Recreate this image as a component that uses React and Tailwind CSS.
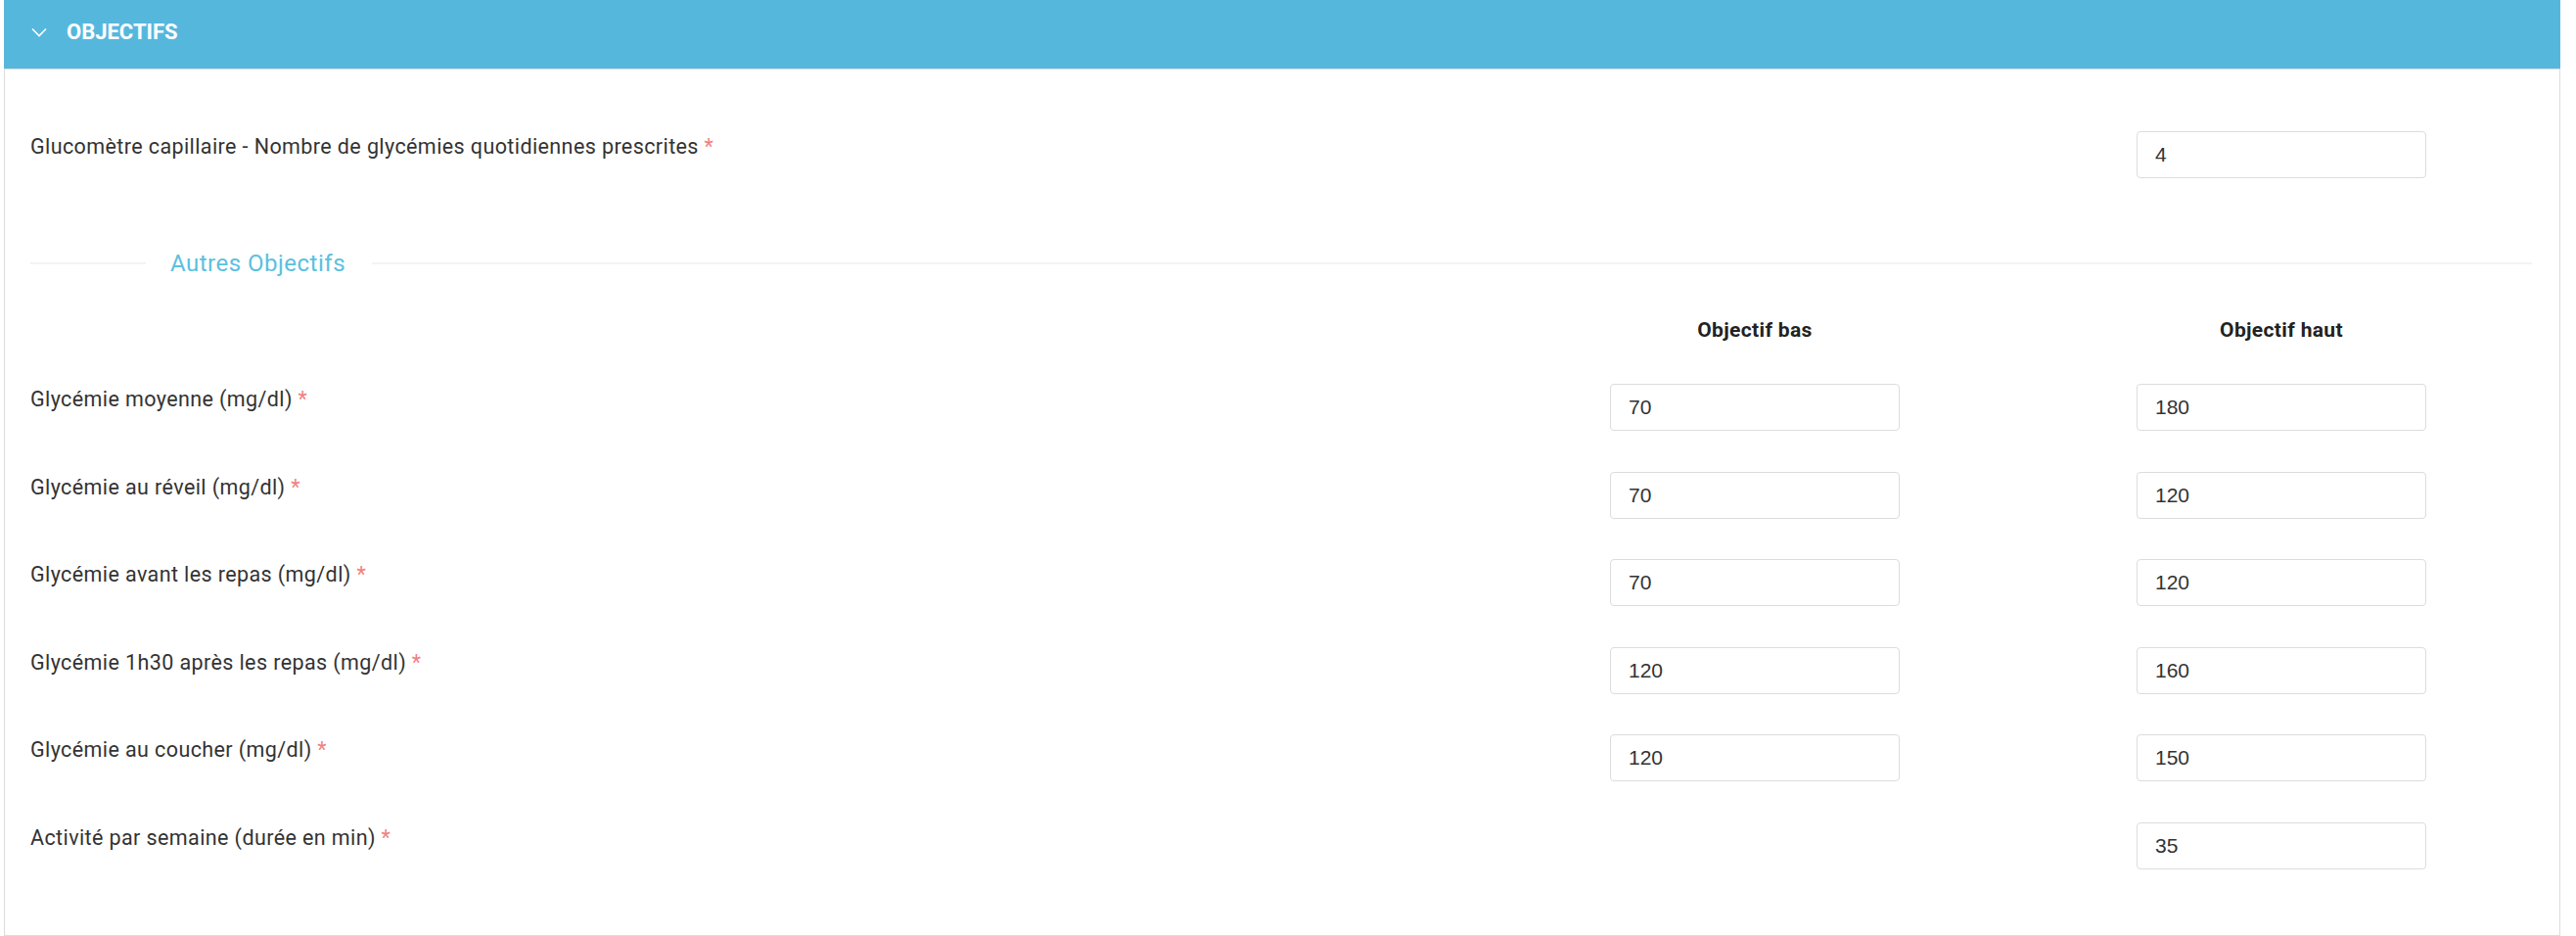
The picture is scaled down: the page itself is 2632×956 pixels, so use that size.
const rows = [
  { label: "Glycémie moyenne (mg/dl)", low: "70", high: "180" },
  { label: "Glycémie au réveil (mg/dl)", low: "70", high: "120" },
  { label: "Glycémie avant les repas (mg/dl)", low: "70", high: "120" },
  { label: "Glycémie 1h30 après les repas (mg/dl)", low: "120", high: "160" },
  { label: "Glycémie au coucher (mg/dl)", low: "120", high: "150" },
  { label: "Activité par semaine (durée en min)", low: null, high: "35" },
];

function Field({ value }) {
  return (
    <input
      readOnly
      value={value}
      className="w-[296px] h-[48px] border border-[#dcdcdc] rounded-[4px] bg-white pl-[18px] text-[21px] text-[#333] outline-none"
      style={{ fontFamily: '"Liberation Sans", Arial, sans-serif' }}
    />
  );
}

function Label({ children }) {
  return (
    <div className="flex-1 pt-[1px] text-[21.5px] tracking-[0.4px] leading-[30px] text-[#333]">
      {children} <span className="text-[#f08080]">*</span>
    </div>
  );
}

export default function App() {
  return (
    <div className="bg-white w-[2632px] h-[956px]" style={{ fontFamily: 'Roboto, "Noto Sans", sans-serif' }}>
      <div className="ml-[4px] w-[2612px]">
        <div className="h-[70px] bg-[#56b7dd] flex items-center gap-[20px] pl-[28px] pb-[4px]">
          <svg width="16" height="10" viewBox="0 0 16 10" fill="none">
            <polyline points="1,1.5 8,8.5 15,1.5" stroke="white" strokeWidth="1.6" />
          </svg>
          <span className="text-white font-bold text-[22px] leading-none">OBJECTIFS</span>
        </div>
        <div className="border border-[#dcdcdc] h-[886px] pt-[63px] pl-[26px] pr-[28px]">
          <div className="flex items-start pr-[108px]">
            <Label>Glucomètre capillaire - Nombre de glycémies quotidiennes prescrites</Label>
            <Field value="4" />
          </div>

          <div className="mt-[67px] h-[40px] flex items-center">
            <div className="w-[118px] h-[2px] bg-[#f3f3f3]" />
            <span className="ml-[25px] mr-[27px] text-[24px] tracking-[0.5px] text-[#5bc0de] leading-none">Autres Objectifs</span>
            <div className="flex-1 h-[2px] bg-[#f3f3f3]" />
          </div>

          <div className="mt-[33px] flex pr-[108px] text-[21px] tracking-[0.35px] leading-[30px] font-bold text-[#222]">
            <div className="flex-1" />
            <div className="w-[296px] text-center">Objectif bas</div>
            <div className="w-[242px]" />
            <div className="w-[296px] text-center">Objectif haut</div>
          </div>

          <div className="mt-[40px] flex flex-col gap-[41.6px]">
            {rows.map((r) => (
              <div key={r.label} className="flex items-start pr-[108px]">
                <Label>{r.label}</Label>
                <div className="w-[296px]">{r.low && <Field value={r.low} />}</div>
                <div className="w-[242px]" />
                <Field value={r.high} />
              </div>
            ))}
          </div>
        </div>
      </div>
    </div>
  );
}
